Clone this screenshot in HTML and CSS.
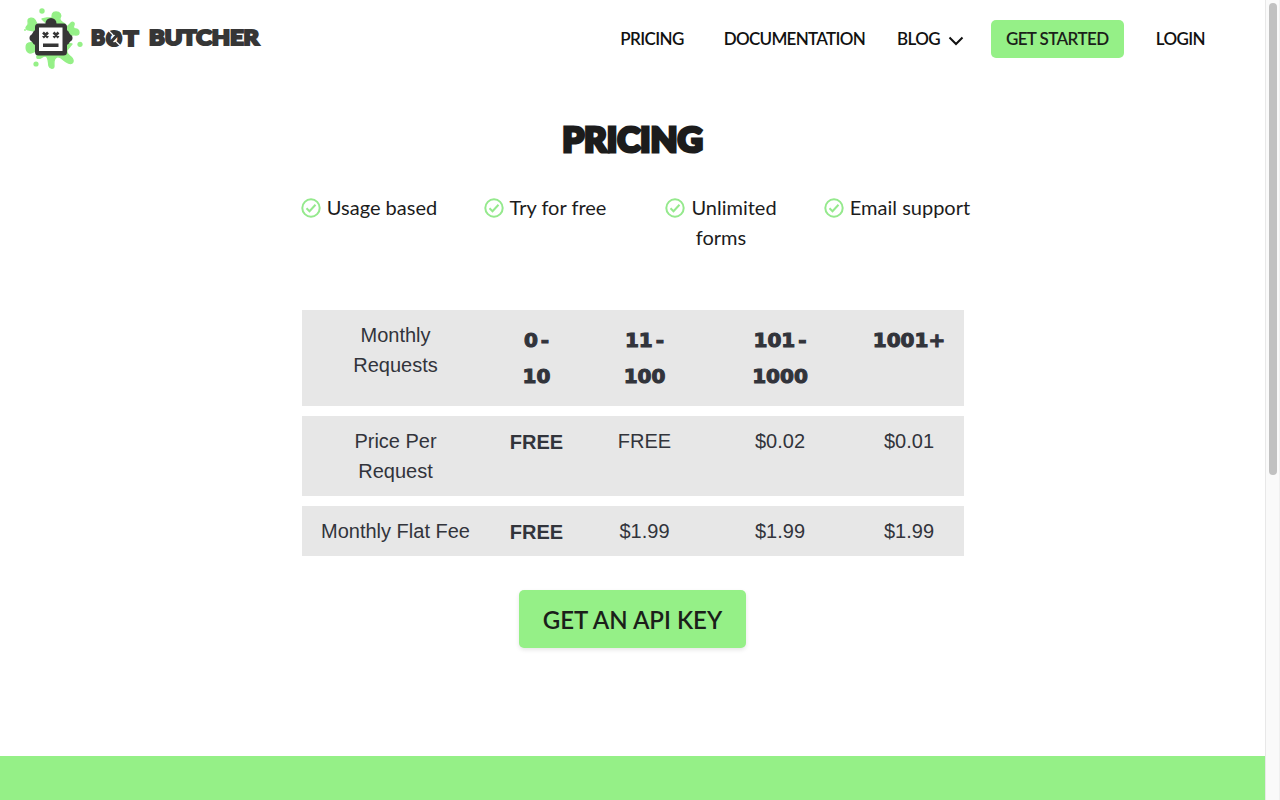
FILE: index.html
```html
<!DOCTYPE html>
<html lang="en">
<head>
  <meta charset="UTF-8">
  <meta name="viewport" content="width=device-width, initial-scale=1.0">
  <title>Pricing - Bot Butcher</title>
  <link rel="stylesheet" href="styles.css">
</head>
<body>
  <div class="page">
    <header class="navbar">
      <a class="brand" href="#">
        <svg width="250" height="72" viewBox="0 0 250 72">
          <!-- Splat -->
          <g fill="#95f087">
            <circle cx="27" cy="11" r="2.700"/>
            <circle cx="65" cy="44.300" r="2.600"/>
            <circle cx="21" cy="64" r="2.600"/>
            <circle cx="10" cy="30" r="0.900"/>
            <g stroke="#95f087" stroke-width="1.300" stroke-linejoin="round">
              <path d="M24 28L20 20c-2-3-7-2-7 1 0 2 1 4-1 5-2 2-1 4 2 4l6 1zM30 22l-3-3 5-1 5 0c0-3 0-6 4-6 4 0 6 3 4 6-1 3 2 4 5 6l-4 6zM52 27l3-3c2-3 5-2 4 1-1 2-1 3 2 4 4 1 4 6 0 6-3 0-5-1-8 2z"/>
              <path d="M20 40c-2 2-4 3-6 3-4 1-4 9 1 10 3 0 5-3 7-1 2 2-1 4 0 6 3 2 5-2 8-2 4 0 3 6 4 10 1 3 5 3 5 0 0-4-1-8 3-9 4-1 6 4 11 6 5 2 7-2 3-6-2-2-5-3-4-7l5-6z"/>
            </g>
          </g>
          <!-- Robot head -->
          <g fill="#363636">
            <circle cx="36" cy="23.500" r="5.500"/>
            <path d="M21 30c-3 0-3 4-5 5-2 1-2 5 0 6 2 1 2 4 5 4zM51 30c3 0 3 4 5 5 2 1 2 5 0 6-2 1-2 4-5 4z"/>
            <rect x="20" y="23.500" width="32" height="32" rx="3.500"/>
          </g>
          <rect x="24" y="27.500" width="23.500" height="23.500" fill="#fff"/>
          <path d="M28 32.500l5 5m0-5l-5 5M38.500 32.500l5 5m0-5l-5 5" stroke="#363636" stroke-width="2.500"/>
          <rect x="28" y="43.500" width="15.500" height="3.500" fill="#363636"/>
          <g class="wordmark">
            <text x="76" y="45" textLength="14" lengthAdjust="spacingAndGlyphs">B</text>
            <text x="91" y="46" textLength="16" lengthAdjust="spacingAndGlyphs">O</text>
            <text x="108.500" y="46" textLength="15" lengthAdjust="spacingAndGlyphs">T</text>
            <text x="134" y="45" textLength="110" lengthAdjust="spacingAndGlyphs">BUTCHER</text>
          </g>
          <path d="M94 44l11-12" stroke="#363636" stroke-width="3"/>
          <path d="M94 31l4 4M101 41.500l4 4" stroke="#fff" stroke-width="1.200"/>
        </svg>
      </a>
      <nav class="nav-links">
        <a class="nav-pricing" href="#">PRICING</a>
        <a class="nav-docs" href="#">DOCUMENTATION</a>
        <a class="nav-blog" href="#">BLOG
          <svg width="16" height="10" viewBox="0 0 16 10" fill="none" stroke="#111" stroke-width="2"><path d="M1.500 1.500L8 8l6.500-6.500"/></svg>
        </a>
        <a class="btn" href="#">GET STARTED</a>
        <a href="#">LOGIN</a>
      </nav>
    </header>

    <main>
      <h1>PRICING</h1>

      <ul class="features">
        <li><svg class="check" viewBox="0 0 20 20"><circle cx="10" cy="10" r="8.700"/><path d="M5.500 10.300l3 3 6-6.500"/></svg>Usage based</li>
        <li><svg class="check" viewBox="0 0 20 20"><circle cx="10" cy="10" r="8.700"/><path d="M5.500 10.300l3 3 6-6.500"/></svg>Try for free</li>
        <li><svg class="check" viewBox="0 0 20 20"><circle cx="10" cy="10" r="8.700"/><path d="M5.500 10.300l3 3 6-6.500"/></svg>Unlimited forms</li>
        <li><svg class="check" viewBox="0 0 20 20"><circle cx="10" cy="10" r="8.700"/><path d="M5.500 10.300l3 3 6-6.500"/></svg>Email support</li>
      </ul>

      <table class="pricing">
        <colgroup>
          <col class="col-label"><col class="col-free"><col class="col-small"><col class="col-medium"><col class="col-large">
        </colgroup>
        <tr>
          <td>Monthly<br>Requests</td>
          <th>0 -<br>10</th>
          <th>11 -<br>100</th>
          <th>101 -<br>1000</th>
          <th>1001+</th>
        </tr>
        <tr>
          <td>Price Per<br>Request</td>
          <td class="free">FREE</td>
          <td>FREE</td>
          <td>$0.02</td>
          <td>$0.01</td>
        </tr>
        <tr>
          <td>Monthly Flat Fee</td>
          <td class="free">FREE</td>
          <td>$1.99</td>
          <td>$1.99</td>
          <td>$1.99</td>
        </tr>
      </table>

      <a class="btn btn-large" href="#">GET AN API KEY</a>
    </main>

    <footer></footer>
  </div>
  <div class="scrollbar"><div class="thumb"></div></div>
</body>
</html>
```
FILE: styles.css
```css
* {
  box-sizing: border-box;
}

body {
  margin: 0;
  height: 800px;
  display: flex;
  overflow: hidden;
  background: #fff;
  color: #1c1c1c;
  font-family: Lato, sans-serif;
}

a {
  color: #111;
  text-decoration: none;
}

.page {
  width: 1265px;
  display: flex;
  flex-direction: column;
}

.navbar {
  height: 78px;
  padding: 0 60px 0 15px;
  display: flex;
  align-items: center;
  justify-content: space-between;
}

.brand svg {
  display: block;
  margin-top: -6px;
}

.wordmark {
  font-family: Lato, sans-serif;
  font-size: 21.5px;
  font-weight: 900;
  fill: #363636;
  stroke: #363636;
  stroke-width: 2.2px;
}

.nav-links {
  display: flex;
  align-items: center;
  font-size: 17px;
  font-weight: 600;
  line-height: 24px;
  letter-spacing: -0.6px;
  white-space: nowrap;
}

.nav-pricing {
  margin-right: 40px;
}

.nav-docs {
  margin-right: 32px;
  letter-spacing: -0.7px;
}

.nav-blog {
  margin-right: 27px;
}

.nav-blog svg {
  margin-left: 4px;
  vertical-align: -1px;
}

.btn {
  background: #95f087;
  color: #1b1f1a;
  border-radius: 5px;
  font-weight: 600;
  text-align: center;
}

.nav-links .btn {
  width: 133px;
  padding: 7px 0;
  margin-right: 32px;
}

main {
  flex: 1;
  display: flex;
  flex-direction: column;
  align-items: center;
}

h1 {
  margin: 36px 0 0;
  font-family: Lato, sans-serif;
  font-size: 35px;
  font-weight: 900;
  line-height: 48px;
  letter-spacing: -0.1px;
  -webkit-text-stroke: 3.2px #1c1c1c;
}

.features {
  width: 704px;
  height: 60px;
  margin: 30px 0 0 1px;
  padding: 0;
  display: grid;
  grid-template-columns: repeat(4, 1fr);
  list-style: none;
  font-size: 20px;
  line-height: 30px;
  text-align: center;
}

.features li {
  padding: 0 12px;
}

.check {
  width: 20px;
  height: 20px;
  margin-right: 6px;
  vertical-align: -3px;
  fill: none;
  stroke: #95e98d;
  stroke-width: 2;
}

.pricing {
  width: 662px;
  margin-top: 48px;
  table-layout: fixed;
  border-spacing: 0 10px;
  color: #32343b;
  font-family: "Liberation Sans", sans-serif;
  font-size: 20px;
  line-height: 30px;
  text-align: center;
}

.pricing td,
.pricing th {
  padding: 10px 0;
  background: #e7e7e7;
  vertical-align: top;
}

.pricing th {
  padding: 12px 0;
  font-family: "DejaVu Sans", sans-serif;
  font-weight: bold;
  line-height: 36px;
  word-spacing: -4px;
  -webkit-text-stroke: 1.1px #32343b;
}

.pricing .free {
  padding-top: 11px;
  padding-bottom: 9px;
  font-weight: bold;
}

.col-label {
  width: 188px;
}

.col-free {
  width: 94px;
}

.col-small {
  width: 122px;
}

.col-medium {
  width: 149px;
}

.col-large {
  width: 109px;
}

.btn-large {
  width: 227px;
  height: 58px;
  margin-top: 24px;
  font-size: 24px;
  line-height: 60px;
  box-shadow: 0 2px 4px rgba(0, 0, 0, 0.1);
}

footer {
  height: 44px;
  background: #95f087;
}

.scrollbar {
  width: 15px;
  padding: 3px 3px 0;
  background: #fafafa;
  border-left: 1px solid #e8e8e8;
  border-right: 1px solid #f0f0f0;
}

.thumb {
  width: 8px;
  height: 472px;
  border-radius: 4px;
  background: #c1c1c1;
}
```
